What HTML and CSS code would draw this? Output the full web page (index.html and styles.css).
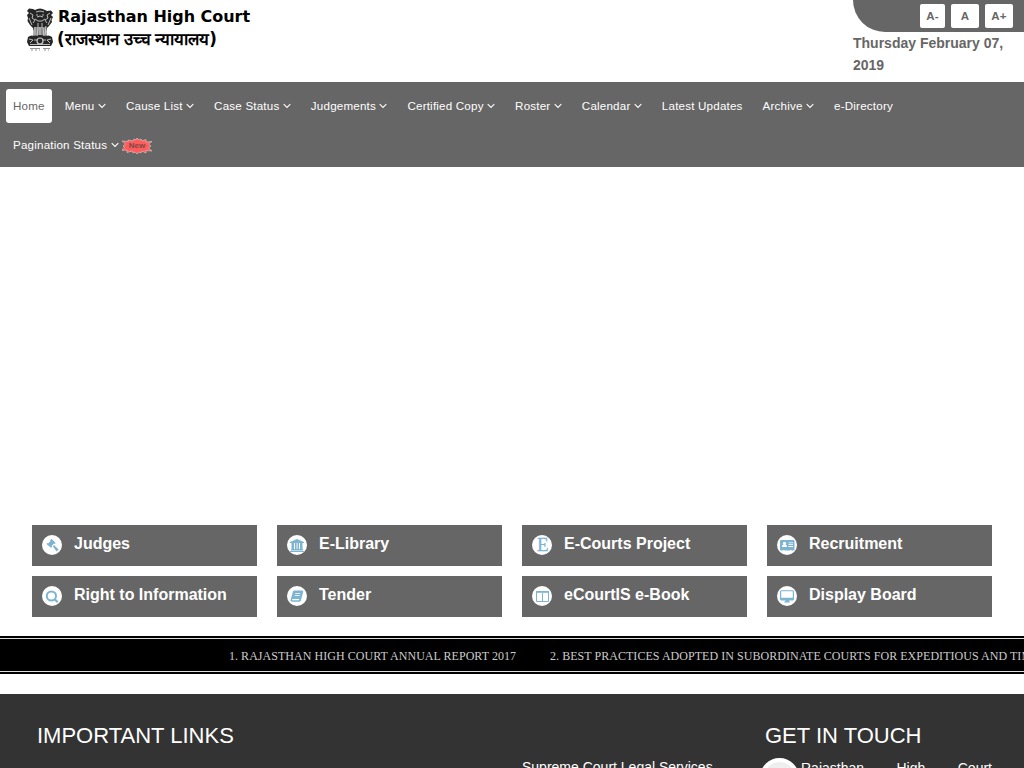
FILE: index.html
```html
<!DOCTYPE html>
<html lang="en">
<head>
<meta charset="utf-8">
<title>Rajasthan High Court</title>
<link rel="stylesheet" href="styles.css">
</head>
<body>
<svg width="0" height="0" class="defs"><symbol id="chev" viewBox="0 0 8 12"><path d="M.7 4.200 4 7.500l3.300-3.300" fill="none" stroke="currentColor" stroke-width="1.1"/></symbol></svg>
<header class="header">
  <a class="brand">
    <svg class="emblem" viewBox="0 0 28 44">
      <g fill="#262626">
        <path d="M9 2Q14-1 19 2l2 1 4-.5 2 2.500-2 2 2 2-1.500 3 .5 2-3 4-2 2-1 4H8l-1-4-3-3-2.500-4 .5-3-1-3 2-2-2-2 2-2.500 4 .5z"/>
        <path d="M8 19h12l1 10H7z" fill="#888"/>
        <path d="M2 29q3-2.500 6-1 6-2 12 0 3-1.500 6 1l1 5-2 4H3l-2-4z"/>
      </g>
      <g fill="none" stroke="#ccc">
        <path d="M10 4q4-2 8 0M10 7h2m4 0h2M9 11l3 2h4l3-2M11 9q3-2 6 0" stroke-width=".9"/>
        <path d="M4 5l3 2-1 3 3 2-2 3M24 5l-3 2 1 3-3 2 2 3M12 15v5m4-5v5M3 10l3 7M25 10l-3 7" stroke-width=".9"/>
        <path d="M9 19v8M12 20l-1 8M14 19v8M17 20l1 8M20 18l-1 9" stroke-width="1"/>
        <circle cx="14" cy="33" r="3" stroke-width="1.200"/>
        <path d="M3 31l4 1-3 3M25 31l-4 1 3 3M8 32h3m6 0h3M4 36.500h20" stroke-width=".9"/>
      </g>
      <path d="M4 40.500h10m3 0h7M5 42h2m2 0h2m2 0h1m4 0h2m2 0h1" stroke="#888" stroke-width=".9" fill="none"/>
    </svg>
    <span class="names"><span class="en">Rajasthan High Court</span><span class="hi" lang="hi">(राजस्थान उच्च न्यायालय)</span></span>
  </a>
  <div class="tools">
    <div class="sizes"><a class="size minus">A-</a><a class="size">A</a><a class="size">A+</a></div>
    <div class="date">Thursday February 07, 2019</div>
  </div>
</header>
<nav class="nav">
  <a class="item active">Home</a>
  <a class="item">Menu <svg class="chev"><use href="#chev"/></svg></a>
  <a class="item">Cause List <svg class="chev"><use href="#chev"/></svg></a>
  <a class="item">Case Status <svg class="chev"><use href="#chev"/></svg></a>
  <a class="item">Judgements <svg class="chev"><use href="#chev"/></svg></a>
  <a class="item">Certified Copy <svg class="chev"><use href="#chev"/></svg></a>
  <a class="item">Roster <svg class="chev"><use href="#chev"/></svg></a>
  <a class="item">Calendar <svg class="chev"><use href="#chev"/></svg></a>
  <a class="item">Latest Updates</a>
  <a class="item">Archive <svg class="chev"><use href="#chev"/></svg></a>
  <a class="item">e-Directory</a>
  <a class="item">Pagination Status <svg class="chev"><use href="#chev"/></svg>
    <svg class="new" viewBox="0 0 30 16"><path d="M0 3l6 .5V2l5 1 1-2 2 1 1-2 2 2 2-1 1 2 4-1.500V4l6-.5-3.500 2.500L29 8l-2.500 2 3.500 3-6-.5V15l-4-2-1 2-2-1-2 2-2-2-2 1-1-2-5 1.500V12l-6 .5 3.500-3L1 8l2.500-2z" fill="#ff5c5c" stroke="#e0d0d0" stroke-width=".6"/><text x="15" y="10.200">New</text></svg></a>
</nav>
<section class="banner"></section>
<main class="cards">
  <a class="card"><svg class="ico" viewBox="0 0 20 20"><circle cx="10" cy="10" r="10"/><g class="b"><path d="M9.500 3.800L13.700 8l-1 .9-.8-.3-2.200 2.200.4.900-1 1L4.400 9l.9-.9.900.3 2.300-2.300-.4-.9z"/><path d="M6.500 8.500l2.500-2.500 2.500 2.500L9 11z"/><path d="M10.800 11.300l1.200-1.200 4.600 4.500-1.900 1.900z"/></g></svg>Judges</a>
  <a class="card"><svg class="ico" viewBox="0 0 20 20"><circle cx="10" cy="10" r="10"/><path class="b" d="M10 4l7 3v1H3V7zM4.500 8H7v6H4.500zM8 8h1.600v6H8zm2.500 0H12v6h-1.500zM13 8h2.500v6H13zM4 14h12v1.500H4zM2.800 16h14.400v1H2.800z"/></svg>E-Library</a>
  <a class="card"><svg class="ico" viewBox="0 0 20 20"><circle cx="10" cy="10" r="10"/><text class="letter" x="10.800" y="16.400">E</text></svg>E-Courts Project</a>
  <a class="card"><svg class="ico" viewBox="0 0 20 20"><circle cx="10" cy="10" r="10"/><rect class="b" x="3" y="5" width="14.500" height="10.500" rx="1"/><path d="M5 12v-1.500l1.500-.8a1.600 1.600 0 1 1 2 0l1.500.8V12zM11.500 7.500H16v.8h-4.500zm0 1.800H16v.8h-4.500zm0 1.800H16v.8h-4.500zM6 15h1.500v.8H6zm7 0h1.500v.8H13z"/></svg>Recruitment</a>
  <a class="card"><svg class="ico" viewBox="0 0 20 20"><circle cx="10" cy="10" r="10"/><g class="line"><circle cx="9.400" cy="10" r="4.600" stroke-width="2"/><path d="M12.500 13l3.200 3.200" stroke-width="2.200"/></g></svg>Right to Information</a>
  <a class="card"><svg class="ico" viewBox="0 0 20 20"><circle cx="10" cy="10" r="10"/><path class="b" d="M7 4.500h8.500l.8 1-2.500 9.300-1 .9H4.500l-1-1.400L6 5.200z"/><path d="M8.300 7h5l-.2.800h-5zm-.5 2h5l-.2.800h-5zM5.300 13h7l-.3 1.200H5z"/></svg>Tender</a>
  <a class="card"><svg class="ico" viewBox="0 0 20 20"><circle cx="10" cy="10" r="10"/><path class="line" d="M4.500 5.500h12v10h-12z M10.500 7v8.500"/><path class="b" d="M4 5h13v1.800H4z"/></svg>eCourtIS e-Book</a>
  <a class="card"><svg class="ico" viewBox="0 0 20 20"><circle cx="10" cy="10" r="10"/><path class="b" fill-rule="evenodd" d="M4 4.200h12l1 1v8.200l-1 1h-4l.5 1.300H13v.8H7v-.8h1l.5-1.300H4l-1-1V5.200zM4.200 5.300v6.400h11.600V5.300z"/></svg>Display Board</a>
</main>
<div class="ticker"><div class="track"><span>1. RAJASTHAN HIGH COURT ANNUAL REPORT 2017</span><span>2. BEST PRACTICES ADOPTED IN SUBORDINATE COURTS FOR EXPEDITIOUS AND TIMELY</span></div></div>
<footer class="footer">
  <section class="links"><h2>IMPORTANT LINKS</h2><p class="link">Supreme Court Legal Services</p></section>
  <section class="touch"><h2>GET IN TOUCH</h2><div class="contact"><span class="seal"></span><p class="address">Rajasthan High Court</p></div></section>
</footer>
</body>
</html>
```
FILE: styles.css
```css
* { box-sizing: border-box; }
body { margin: 0; height: 768px; overflow: hidden; background: #fff; font-family: "Liberation Sans", Arial, sans-serif; display: flex; flex-direction: column; }
body > * { flex-shrink: 0; }
h2, p { margin: 0; font-weight: 400; }
.defs { display: none; }
.header { height: 82px; display: flex; justify-content: space-between; }
.brand { display: flex; padding: 8px 0 0 26px; color: #000; }
.emblem { width: 28px; height: 44px; }
.names { display: flex; flex-direction: column; padding-left: 4px; font: bold 16px "DejaVu Sans", sans-serif; white-space: nowrap; }
.en { line-height: 18px; letter-spacing: -.03px; }
.hi { line-height: 27px; font-size: 16.8px; word-spacing: -1px; margin-left: -1px; }
.tools { width: 171px; }
.sizes { height: 32px; background: #666; border-bottom-left-radius: 32px; display: flex; justify-content: flex-end; gap: 6px; padding: 4px 11px 0 0; }
.size { width: 28px; height: 24px; background: #fff; border-radius: 2px; color: #666; font-weight: 700; font-size: 11.5px; letter-spacing: .25px; line-height: 24px; text-align: center; }
.minus { width: 25px; }
.date { color: #666; font-weight: 700; font-size: 14px; line-height: 22px; }
.nav { height: 85px; background: #666; color: #fff; padding: 7px 6px 0; display: flex; flex-wrap: wrap; align-content: flex-start; gap: 5px 6px; font-size: 11.6px; letter-spacing: .197px; }
.item { height: 34px; line-height: 34px; padding: 0 7px; border-radius: 3px; white-space: nowrap; }
.active { background: #fff; color: #666; }
.chev { width: 8px; height: 12px; vertical-align: -2px; }
.new { width: 30px; height: 16px; vertical-align: -5px; }
.new text { font: bold 8px "Liberation Sans", sans-serif; letter-spacing: 0; fill: #7c4646; text-anchor: middle; }
.banner { height: 358px; }
.cards { display: grid; grid-template-columns: repeat(4, 225px); gap: 10px 20px; padding: 0 32px; }
.card { height: 41px; background: #666; color: #fff; font-weight: 700; font-size: 16px; line-height: 37px; display: flex; gap: 12px; padding-left: 10px; }
.ico { width: 20px; height: 20px; margin-top: 10px; fill: #fff; }
.b { fill: #7db4d2; }
.line { fill: none; stroke: #7db4d2; }
.letter { font: 19px "Liberation Serif", serif; fill: #7db4d2; stroke: #7db4d2; stroke-width: .3; text-anchor: middle; }
.ticker { margin-top: 19px; height: 38px; background: #000; padding: 2px 0; }
.track { height: 34px; border-top: 1px solid #ddd; border-bottom: 1px solid #ddd; display: flex; gap: 34px; padding-left: 229px; overflow: hidden; font: 12px/34px "Liberation Serif", serif; letter-spacing: .04px; color: #ccc; white-space: nowrap; }
.footer { margin-top: 20px; height: 74px; background: #333; color: #fff; display: flex; overflow: hidden; }
.footer h2 { font-size: 22px; line-height: 26px; padding-top: 29px; }
.links { width: 728px; padding-left: 37px; }
.link { padding-left: 485px; font-size: 14px; line-height: 20px; margin-top: 8px; }
.touch { width: 264px; padding-left: 37px; }
.contact { display: flex; gap: 3px; margin: 8px 0 0 -5px; }
.seal { width: 39px; height: 39px; flex: none; margin-top: 1px; margin-right: -1px; border-radius: 50%; border: 4px solid #fff; background: #eee; }
.address { flex: 1; font-size: 14px; line-height: 23px; text-align: justify; text-align-last: justify; }
```
